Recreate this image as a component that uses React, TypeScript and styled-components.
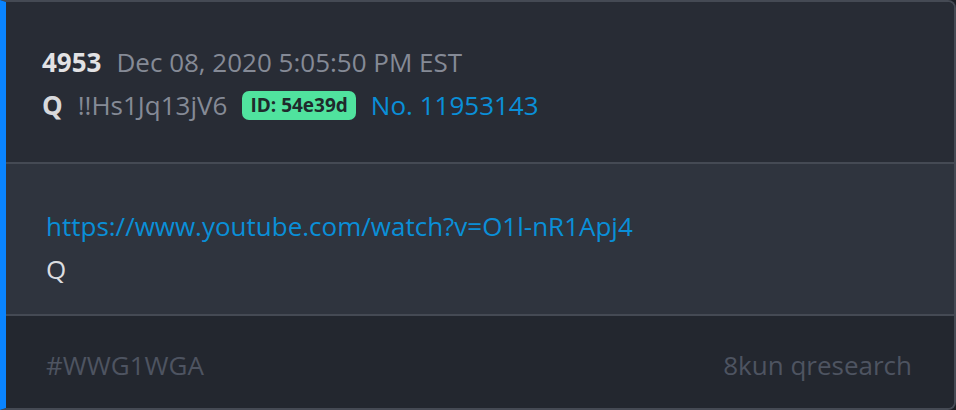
import React from 'react';
import styled, { createGlobalStyle } from 'styled-components';

const GlobalStyle = createGlobalStyle`
  html, body {
    margin: 0;
    padding: 0;
    background: #1c1f25;
  }
  * {
    box-sizing: border-box;
  }
  body {
    font-family: "Open Sans", "Noto Sans", sans-serif;
  }
`;

interface Post {
  num: number;
  date: string;
  author: string;
  trip: string;
  id: string;
  no: string;
  link: string;
  body: string;
  tag: string;
  source: string;
}

const post: Post = {
  num: 4953,
  date: 'Dec 08, 2020 5:05:50 PM EST',
  author: 'Q',
  trip: '!!Hs1Jq13jV6',
  id: '54e39d',
  no: '11953143',
  link: 'https://www.youtube.com/watch?v=O1l-nR1Apj4',
  body: 'Q',
  tag: '#WWG1WGA',
  source: '8kun qresearch',
};

const App: React.FC = () => (
  <>
    <GlobalStyle />
    <Card>
      <Header>
        <MetaRow>
          <PostNum>{post.num}</PostNum>
          <Muted>{post.date}</Muted>
        </MetaRow>
        <MetaRow>
          <Author>{post.author}</Author>
          <Muted>{post.trip}</Muted>
          <IdBadge>ID: {post.id}</IdBadge>
          <PostLink href="#">No. {post.no}</PostLink>
        </MetaRow>
      </Header>
      <Body>
        <Line>
          <PostLink href="#">{post.link}</PostLink>
        </Line>
        <Line>{post.body}</Line>
      </Body>
      <Footer>
        <FooterText>{post.tag}</FooterText>
        <FooterText>{post.source}</FooterText>
      </Footer>
    </Card>
  </>
);

export default App;

const Card = styled.div`
  width: 956px;
  height: 410px;
  display: flex;
  flex-direction: column;
  background: #282c35;
  border: 2px solid #454a54;
  border-left: 6px solid #0a84ff;
  border-radius: 0 8px 8px 0;
  overflow: hidden;
  font-size: 26px;
  line-height: 43px;
`;

const Header = styled.div`
  display: flex;
  flex-direction: column;
  padding: 39px 36px 35px;
  background: #282c35;
  border-bottom: 2px solid #454a54;
`;

const MetaRow = styled.div`
  display: flex;
  align-items: center;
  gap: 15px;
  white-space: nowrap;
`;

const PostNum = styled.span`
  font-weight: 700;
  color: #e2e2e4;
`;

const Author = styled.span`
  font-weight: 700;
  color: #d8d9dc;
`;

const Muted = styled.span`
  color: #858a96;
`;

const IdBadge = styled.span`
  display: inline-flex;
  align-items: center;
  height: 29px;
  padding: 0 8px;
  border-radius: 7px;
  background: #50e39e;
  color: #1f2a2c;
  font-size: 19px;
  font-weight: 700;
  line-height: 29px;
`;

const PostLink = styled.a`
  color: #0a8fd8;
  text-decoration: none;
`;

const Body = styled.div`
  flex: 1;
  display: flex;
  flex-direction: column;
  padding: 41px 40px 0;
  background: #2f343e;
  border-bottom: 2px solid #454a54;
`;

const Line = styled.div`
  color: #dcdde0;
`;

const Footer = styled.div`
  height: 92px;
  display: flex;
  justify-content: space-between;
  align-items: center;
  padding: 6px 42px 0 40px;
  background: #23272f;
`;

const FooterText = styled.span`
  color: #4e5461;
`;
